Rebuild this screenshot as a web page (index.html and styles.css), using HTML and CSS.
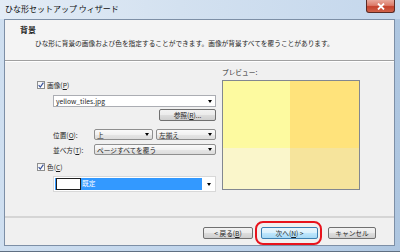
FILE: index.html
```html
<!DOCTYPE html>
<html lang="ja">
<head>
    <meta charset="UTF-8">
    <title>ひな形セットアップ ウィザード</title>
    <link rel="stylesheet" href="styles.css">
</head>
<body>
    <div class="window">
        <div class="titlebar">
            <span class="title">ひな形セットアップ ウィザード</span>
            <span class="close-btn">
                <svg width="8" height="7" viewBox="0 0 8 7">
                    <path d="M1 0.5 L7 6.5 M7 0.5 L1 6.5" stroke="#fff" stroke-width="1.8"/>
                </svg>
            </span>
        </div>

        <div class="client">
            <div class="header">
                <div class="header-title">背景</div>
                <div class="header-desc">ひな形に背景の画像および色を指定することができます。画像が背景すべてを覆うことがあります。</div>
            </div>

            <div class="main">
                <div class="options">
                    <div class="check-row">
                        <span class="checkbox">
                            <svg width="6" height="6" viewBox="0 0 6 6"><path d="M0.6 3.2 L2.3 5 L5.4 0.6" fill="none" stroke="#3a539b" stroke-width="1.2"/></svg>
                        </span>
                        <span>画像(<u>P</u>)</span>
                    </div>
                    <div class="combo combo-edit indent">
                        <span class="combo-text">yellow_tiles.jpg</span>
                        <span class="arrow"></span>
                    </div>
                    <div class="browse-row">
                        <span class="btn browse-btn">参照(<u>R</u>)...</span>
                    </div>
                    <div class="field-row indent">
                        <span class="field-label">位置(<u>O</u>):</span>
                        <div class="combo combo-pos">
                            <span class="combo-text">上</span>
                            <span class="arrow"></span>
                        </div>
                        <div class="combo combo-align">
                            <span class="combo-text">左揃え</span>
                            <span class="arrow"></span>
                        </div>
                    </div>
                    <div class="field-row field-row-2 indent">
                        <span class="field-label">並べ方(<u>T</u>):</span>
                        <div class="combo combo-wide">
                            <span class="combo-text">ページすべてを覆う</span>
                            <span class="arrow"></span>
                        </div>
                    </div>
                    <div class="check-row check-color">
                        <span class="checkbox">
                            <svg width="6" height="6" viewBox="0 0 6 6"><path d="M0.6 3.2 L2.3 5 L5.4 0.6" fill="none" stroke="#3a539b" stroke-width="1.2"/></svg>
                        </span>
                        <span>色(<u>C</u>)</span>
                    </div>
                    <div class="color-combo indent">
                        <div class="color-selected">
                            <span class="swatch"></span>
                            <span class="color-name">既定</span>
                        </div>
                        <span class="arrow"></span>
                    </div>
                </div>

                <div class="preview">
                    <div class="preview-label">プレビュー:</div>
                    <div class="preview-box">
                        <div class="tile tile-1"></div>
                        <div class="tile tile-2"></div>
                        <div class="tile tile-3"></div>
                        <div class="tile tile-4"></div>
                    </div>
                </div>
            </div>

            <div class="separator"></div>

            <div class="footer">
                <span class="btn btn-back">&lt; 戻る(<u>B</u>)</span>
                <span class="next-wrap">
                    <span class="btn btn-next">次へ(<u>N</u>) &gt;</span>
                </span>
                <span class="btn btn-cancel">キャンセル</span>
            </div>
        </div>
    </div>
</body>
</html>
```

FILE: styles.css
```css
:root {
    --ui-font: "Noto Sans CJK JP", "Noto Sans", sans-serif;
    --face: #f0f0f0;
    --text: #1e1e1e;
    --btn-border: #707070;
    --select-blue: #3399ff;
}

html, body {
    margin: 0;
    padding: 0;
}

body {
    width: 400px;
    height: 252px;
    overflow: hidden;
    font-family: var(--ui-font);
    font-size: 6.7px;
    color: var(--text);
}

.window {
    width: 400px;
    height: 252px;
    box-sizing: border-box;
    display: flex;
    flex-direction: column;
    background: linear-gradient(to right, #cfdff0 0%, #c2d6ec 40%, #b8cfe8 75%, #aec6e0 100%);
    border-bottom: 1px solid #5f6f82;
}

/* title bar */
.titlebar {
    height: 19px;
    display: flex;
    justify-content: space-between;
    align-items: flex-start;
    background: linear-gradient(to right, #e3ecf6 0%, #d3e1f0 45%, #c4d7ec 100%);
}

.title {
    font-size: 8px;
    line-height: 10px;
    margin: 4px 0 0 5px;
    color: #101010;
}

.close-btn {
    width: 29px;
    height: 13px;
    margin-right: 5px;
    box-sizing: border-box;
    border: 1px solid #5a2a24;
    border-top: none;
    border-radius: 0 0 3px 3px;
    background: linear-gradient(#e9a99c 0%, #dc7b69 45%, #c5412c 55%, #d0634a 100%);
    display: flex;
    align-items: center;
    justify-content: center;
}

.close-btn svg {
    display: block;
}

/* client area */
.client {
    flex: 1;
    margin: 0 5px 5px 4px;
    border: 1px solid #7d8fa6;
    background: var(--face);
    display: flex;
    flex-direction: column;
}

.header {
    height: 41px;
    box-sizing: border-box;
    padding: 5px 0 0 15px;
    background: #f4f4f4;
    border-bottom: 1px solid #a0a0a0;
    box-shadow: 0 1px 0 #ffffff;
}

.header-title {
    font-size: 8px;
    font-weight: bold;
    line-height: 10px;
}

.header-desc {
    margin: 4px 0 0 15px;
    line-height: 9px;
    white-space: nowrap;
}

/* body */
.main {
    height: 154px;
    display: flex;
    margin-top: 1px;
}

.options {
    width: 179px;
    padding: 18px 0 0 32px;
    display: flex;
    flex-direction: column;
}

.indent {
    margin-left: 16px;
}

.check-row {
    display: flex;
    align-items: center;
    gap: 2px;
    height: 10px;
    line-height: 10px;
}

.checkbox {
    width: 8px;
    height: 8px;
    box-sizing: border-box;
    border: 1px solid #8e8f8f;
    background: linear-gradient(#f4f4f4, #ffffff);
    display: flex;
    align-items: center;
    justify-content: center;
}

.checkbox svg {
    display: block;
}

.combo {
    height: 12px;
    box-sizing: border-box;
    border: 1px solid #8f8f8f;
    border-radius: 2px;
    display: flex;
    align-items: center;
    padding: 0 3px 0 2px;
    background: linear-gradient(#fafafa 0%, #f1f1f1 50%, #e6e6e6 51%, #dcdcdc 100%);
}

.combo-edit {
    margin-top: 5px;
    background: #ffffff;
    border-color: #abadb3;
    border-radius: 0;
}

.combo-text {
    flex: 1;
    line-height: 10px;
    white-space: nowrap;
}

.arrow {
    width: 0;
    height: 0;
    border-left: 2.5px solid transparent;
    border-right: 2.5px solid transparent;
    border-top: 3px solid #000;
}

.browse-row {
    display: flex;
    justify-content: flex-end;
    margin-top: 2px;
}

.btn {
    display: inline-flex;
    align-items: center;
    justify-content: center;
    height: 12px;
    box-sizing: border-box;
    border: 1px solid var(--btn-border);
    border-radius: 2px;
    line-height: 10px;
    white-space: nowrap;
    background: linear-gradient(#f2f2f2 0%, #ebebeb 50%, #dddddd 51%, #cfcfcf 100%);
}

.browse-btn {
    width: 57px;
}

.field-row {
    display: flex;
    align-items: center;
    margin-top: 8px;
}

.field-row-2 {
    margin-top: 4px;
}

.field-label {
    width: 41px;
    line-height: 10px;
    white-space: nowrap;
}

.combo-pos {
    width: 59px;
    height: 11px;
    margin-right: 3px;
}

.combo-align {
    width: 60px;
    height: 11px;
}

.combo-wide {
    width: 122px;
    height: 11px;
}

.check-color {
    margin-top: 7px;
}

.color-combo {
    margin-top: 4px;
    height: 16px;
    box-sizing: border-box;
    border: 1px solid #d8d8d8;
    background: #ffffff;
    display: flex;
    align-items: center;
    padding: 1px 4px 1px 1px;
}

.color-selected {
    flex: 1;
    align-self: stretch;
    display: flex;
    align-items: center;
    background: var(--select-blue);
    margin-right: 5px;
}

.swatch {
    width: 25px;
    height: 12px;
    box-sizing: border-box;
    border: 1px solid #202020;
    background: #ffffff;
    margin-left: 1px;
}

.color-name {
    color: #ffffff;
    line-height: 10px;
    margin: -3px 0 0 1px;
}

/* preview */
.preview {
    margin-left: 6px;
    padding-top: 5px;
}

.preview-label {
    line-height: 10px;
}

.preview-box {
    margin-top: 3px;
    width: 138px;
    height: 110px;
    box-sizing: border-box;
    border: 1px solid #828790;
    display: grid;
    grid-template-columns: 67px 69px;
    grid-template-rows: 67px 41px;
}

.tile-1 { background: #fdfaa0; }
.tile-2 { background: #ffe37b; }
.tile-3 { background: #faf6cb; }
.tile-4 { background: #f6e49c; }

.separator {
    height: 2px;
    background: #d5d5d5;
}

/* buttons */
.footer {
    flex: 1;
    display: flex;
    align-items: flex-start;
    justify-content: flex-end;
    padding: 9px 18px 0 0;
}

.btn-back {
    width: 50px;
    height: 12px;
}

.next-wrap {
    position: relative;
    margin: 0 10px 0 8px;
    display: inline-flex;
}

.next-wrap::after {
    content: "";
    position: absolute;
    left: -6px;
    right: -4px;
    top: -6px;
    bottom: -6px;
    border: 2px solid #e8131c;
    border-radius: 8px;
}

.btn-next {
    width: 57px;
    border-color: #3c7fb1;
    background: linear-gradient(#eaf6fd 0%, #d9f0fc 50%, #bee6fd 51%, #a7d9f5 100%);
}

.btn-cancel {
    width: 48px;
}
```
